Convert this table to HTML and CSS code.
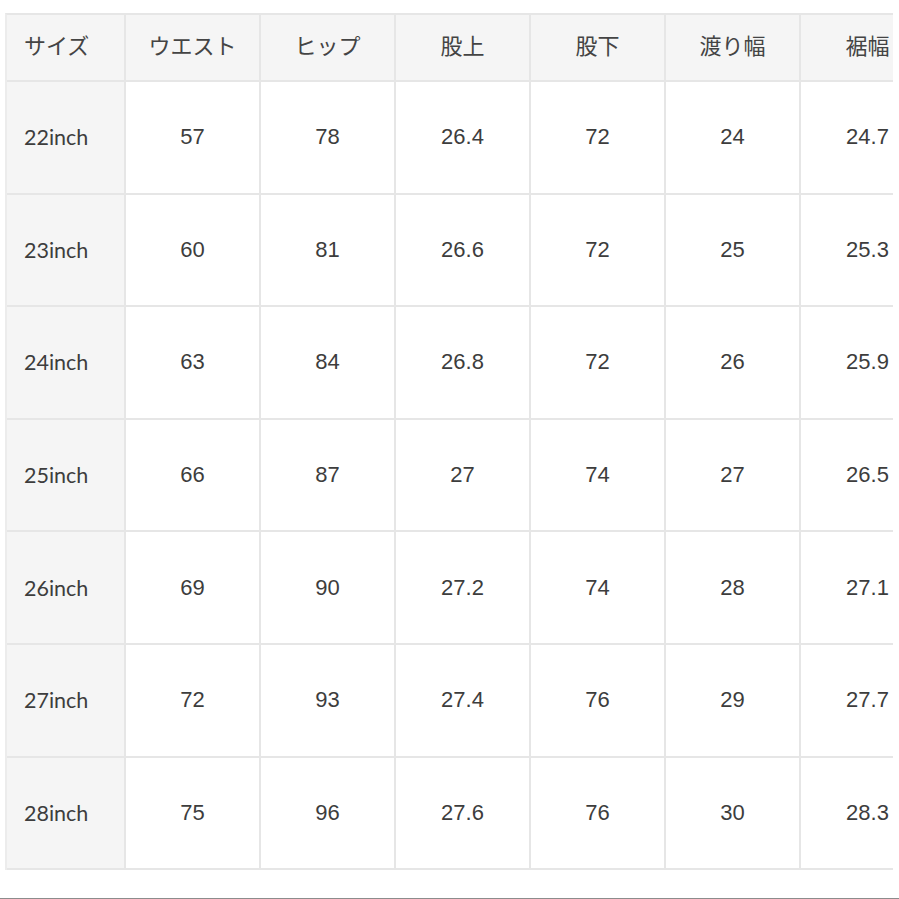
FILE: index.html
```html
<!DOCTYPE html>
<html lang="ja">
<head>
<meta charset="utf-8">
<title>サイズ表</title>
<link rel="stylesheet" href="styles.css">
</head>
<body>
<div class="scroller">
  <table class="size-table">
    <colgroup>
      <col class="c-first">
      <col class="c"><col class="c"><col class="c"><col class="c"><col class="c"><col class="c">
    </colgroup>
    <thead>
      <tr><th class="first">サイズ</th><th>ウエスト</th><th>ヒップ</th><th>股上</th><th>股下</th><th>渡り幅</th><th>裾幅</th></tr>
    </thead>
    <tbody>
      <tr><th class="first">22inch</th><td>57</td><td>78</td><td>26.4</td><td>72</td><td>24</td><td>24.7</td></tr>
      <tr><th class="first">23inch</th><td>60</td><td>81</td><td>26.6</td><td>72</td><td>25</td><td>25.3</td></tr>
      <tr><th class="first">24inch</th><td>63</td><td>84</td><td>26.8</td><td>72</td><td>26</td><td>25.9</td></tr>
      <tr><th class="first">25inch</th><td>66</td><td>87</td><td>27</td><td>74</td><td>27</td><td>26.5</td></tr>
      <tr><th class="first">26inch</th><td>69</td><td>90</td><td>27.2</td><td>74</td><td>28</td><td>27.1</td></tr>
      <tr><th class="first">27inch</th><td>72</td><td>93</td><td>27.4</td><td>76</td><td>29</td><td>27.7</td></tr>
      <tr><th class="first">28inch</th><td>75</td><td>96</td><td>27.6</td><td>76</td><td>30</td><td>28.3</td></tr>
    </tbody>
  </table>
</div>
<div class="rule"></div>
</body>
</html>
```
FILE: styles.css
```css
html, body {
  margin: 0;
  padding: 0;
  background: #ffffff;
}
body {
  width: 899px;
  height: 899px;
  overflow: hidden;
  font-family: "Liberation Sans", "Noto Sans CJK JP", sans-serif;
  color: #3d3d3d;
}
.scroller {
  margin: 13px 0 0 5px;
  width: 888px;
  overflow: hidden;
}
.size-table {
  border-collapse: separate;
  border-spacing: 0;
  table-layout: fixed;
  width: 929px;
  border-top: 2px solid #e6e6e6;
  border-left: 2px solid #ececec;
}
.c-first { width: 119px; }
.c { width: 135px; }
.size-table th,
.size-table td {
  box-sizing: border-box;
  border-right: 2px solid #e6e6e6;
  border-bottom: 2px solid #e6e6e6;
  font-size: 22px;
  font-weight: 400;
  text-align: center;
  padding: 0;
  white-space: nowrap;
}
.size-table thead th {
  height: 67px;
  background: #f5f5f5;
  font-family: "Noto Sans CJK JP", sans-serif;
  font-size: 22px;
  color: #444;
  padding-bottom: 7px;
}
.size-table tbody th,
.size-table tbody td {
  height: 112.6px;
}
.size-table .first {
  background: #f5f5f5;
  text-align: left;
  padding-left: 17px;
}
.size-table tbody .first {
  font-family: "Lato", "Noto Sans CJK JP", sans-serif;
  font-size: 21.5px;
}
.rule {
  margin-top: 28px;
  height: 2px;
  background: #8c8c8c;
}
```
